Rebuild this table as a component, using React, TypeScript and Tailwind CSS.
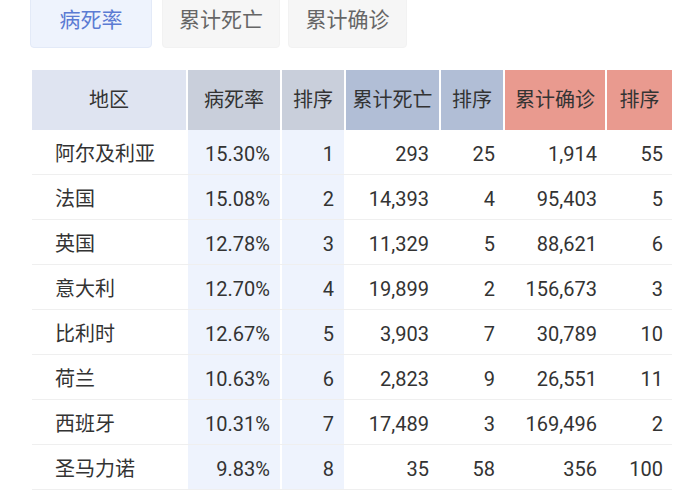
import React, { useState } from 'react';

type Row = {
  name: string;
  rate: string;
  rateRank: number;
  deaths: string;
  deathRank: number;
  confirmed: string;
  confirmedRank: number;
};

const ROWS: Row[] = [
  { name: '阿尔及利亚', rate: '15.30%', rateRank: 1, deaths: '293', deathRank: 25, confirmed: '1,914', confirmedRank: 55 },
  { name: '法国', rate: '15.08%', rateRank: 2, deaths: '14,393', deathRank: 4, confirmed: '95,403', confirmedRank: 5 },
  { name: '英国', rate: '12.78%', rateRank: 3, deaths: '11,329', deathRank: 5, confirmed: '88,621', confirmedRank: 6 },
  { name: '意大利', rate: '12.70%', rateRank: 4, deaths: '19,899', deathRank: 2, confirmed: '156,673', confirmedRank: 3 },
  { name: '比利时', rate: '12.67%', rateRank: 5, deaths: '3,903', deathRank: 7, confirmed: '30,789', confirmedRank: 10 },
  { name: '荷兰', rate: '10.63%', rateRank: 6, deaths: '2,823', deathRank: 9, confirmed: '26,551', confirmedRank: 11 },
  { name: '西班牙', rate: '10.31%', rateRank: 7, deaths: '17,489', deathRank: 3, confirmed: '169,496', confirmedRank: 2 },
  { name: '圣马力诺', rate: '9.83%', rateRank: 8, deaths: '35', deathRank: 58, confirmed: '356', confirmedRank: 100 },
];

const TABS = [
  { label: '病死率', cls: 'w-[122px] mr-[10px]' },
  { label: '累计死亡', cls: 'w-[118px] mr-[8px]' },
  { label: '累计确诊', cls: 'w-[119px]' },
];

const App: React.FC = () => {
  const [tab, setTab] = useState(0);

  return (
    <div
      className="w-[700px] h-[500px] overflow-hidden bg-white text-[#333]"
      style={{ fontFamily: 'Roboto, "Noto Sans CJK SC", sans-serif' }}
    >
      {/* Tabs */}
      <div className="flex pl-[30px] -mt-[6px]">
        {TABS.map((t, i) => (
          <button
            key={t.label}
            onClick={() => setTab(i)}
            className={`h-[54px] rounded-[4px] border text-[21px] ${t.cls} ${
              tab === i
                ? 'bg-[#eef3fd] border-[#e3eaf8] text-[#5b7bd3]'
                : 'bg-[#f6f6f6] border-[#f2f2f2] text-[#666]'
            }`}
          >
            {t.label}
          </button>
        ))}
      </div>

      {/* Table */}
      <div className="mt-[22px] ml-[32px] w-[640px]">
        <div className="flex gap-[2px] h-[60px] text-[20px] text-[#333]">
          <div className="w-[154px] bg-[#dfe4f1] flex items-center justify-center">地区</div>
          <div className="w-[92px] bg-[#c9cfdb] flex items-center justify-center">病死率</div>
          <div className="w-[62px] bg-[#c9cfdb] flex items-center justify-center">排序</div>
          <div className="w-[93px] bg-[#b1bed6] flex items-center justify-center">累计死亡</div>
          <div className="w-[62px] bg-[#b1bed6] flex items-center justify-center">排序</div>
          <div className="w-[100px] bg-[#e99a8f] flex items-center justify-center">累计确诊</div>
          <div className="w-[65px] bg-[#e99a8f] flex items-center justify-center">排序</div>
        </div>

        {ROWS.map((r) => (
          <div key={r.name} className="flex gap-[2px] h-[45px] border-b border-[#efefef] text-[20px] text-[#333]">
            <div className="w-[154px] flex items-center pl-[23px] pt-[4px]">{r.name}</div>
            <div className="w-[92px] bg-[#eef3fd] flex items-center justify-end pr-[10px] pt-[4px]">{r.rate}</div>
            <div className="w-[62px] bg-[#eef3fd] flex items-center justify-end pr-[10px] pt-[4px]">{r.rateRank}</div>
            <div className="w-[93px] flex items-center justify-end pr-[10px] pt-[4px]">{r.deaths}</div>
            <div className="w-[62px] flex items-center justify-end pr-[8px] pt-[4px]">{r.deathRank}</div>
            <div className="w-[100px] flex items-center justify-end pr-[8px] pt-[4px]">{r.confirmed}</div>
            <div className="w-[65px] flex items-center justify-end pr-[9px] pt-[4px]">{r.confirmedRank}</div>
          </div>
        ))}
      </div>
    </div>
  );
};

export default App;
